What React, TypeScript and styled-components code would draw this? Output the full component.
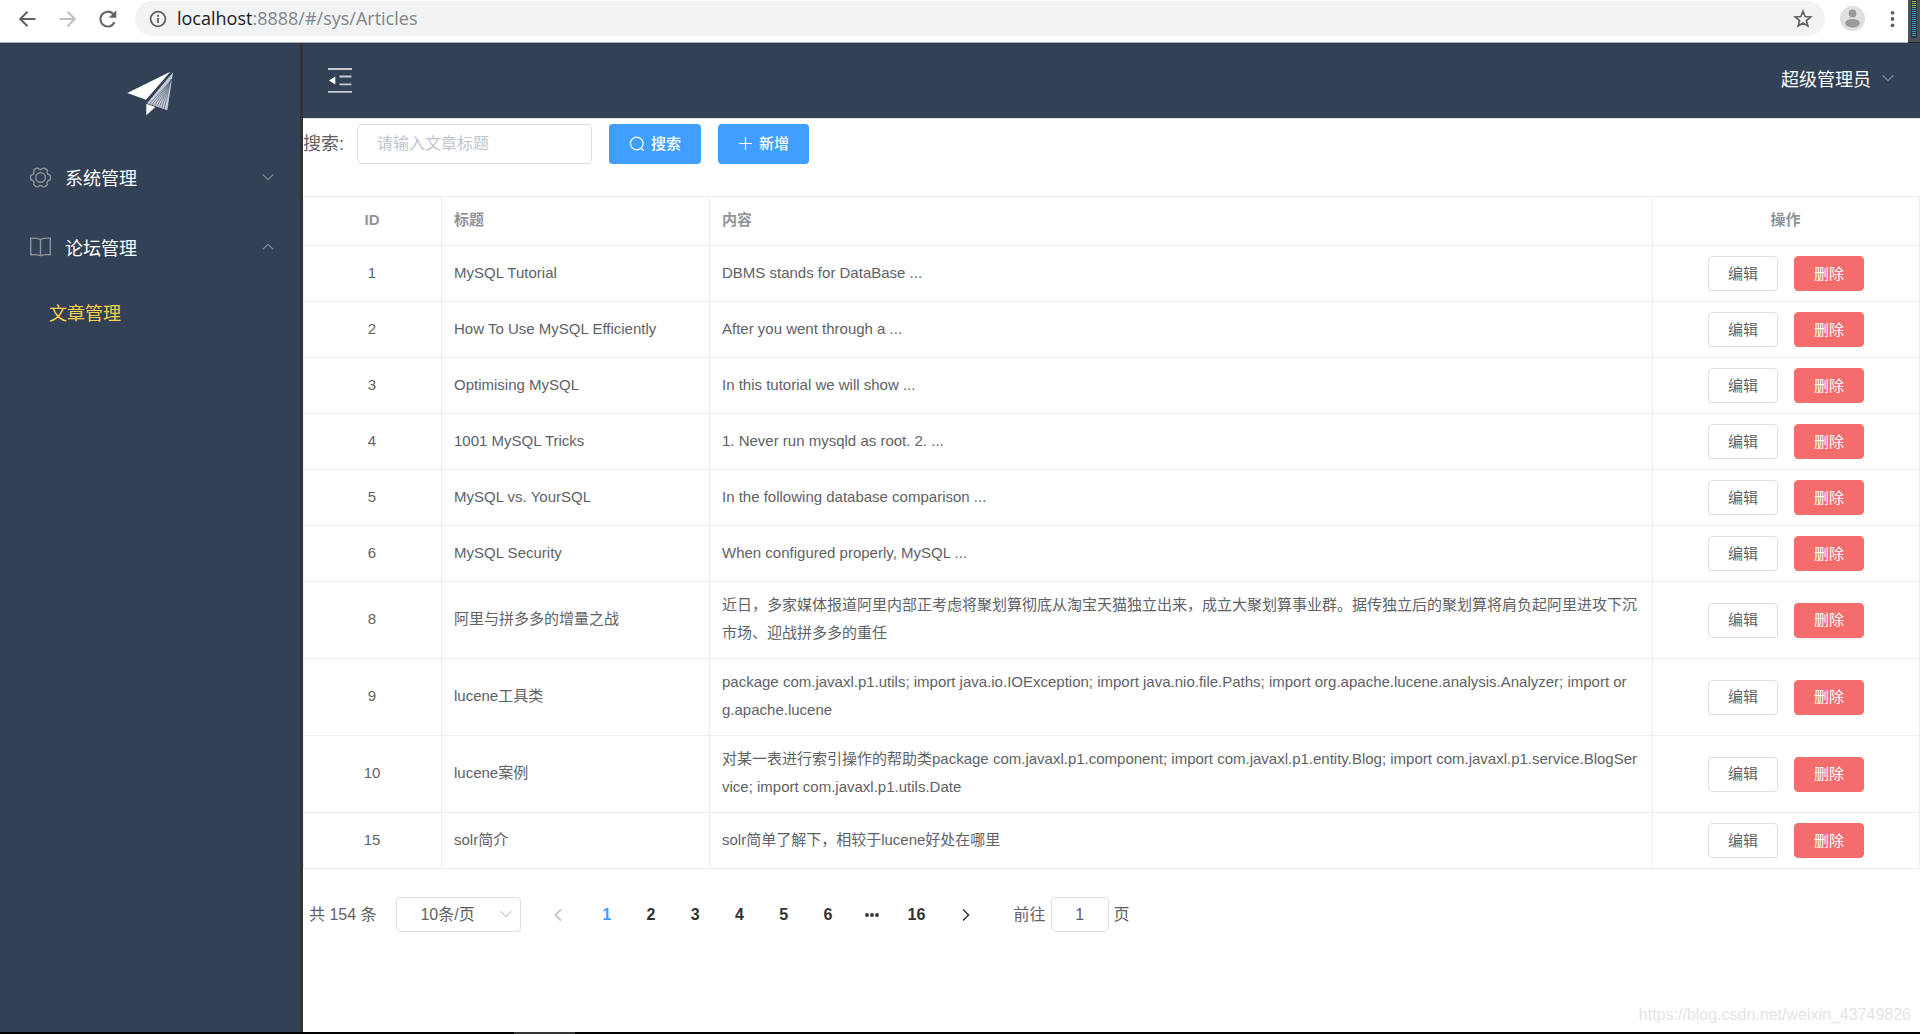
import React, { useState } from "react";
import styled, { createGlobalStyle } from "styled-components";

const GlobalStyle = createGlobalStyle`
  * { box-sizing: border-box; }
  body {
    margin: 0;
    background: #fff;
    color: #606266;
    font-family: "Liberation Sans", "Noto Sans CJK SC", sans-serif;
  }
  button, input, select { font-family: inherit; margin: 0; }
  button { cursor: pointer; }
`;

const Page = styled.div`
  display: flex;
  flex-direction: column;
  min-height: 100vh;
`;

/* ---------- browser bar ---------- */

const BrowserBar = styled.header`
  display: flex;
  align-items: flex-start;
  height: 43px;
  background: #fff;
  border-bottom: 1px solid #a9acb0;
`;

const NavButtons = styled.div`
  display: flex;
  align-items: center;
  gap: 20px;
  height: 37px;
  padding: 0 15px 0 17px;
`;

const IconButton = styled.button<{ $color?: string }>`
  display: flex;
  padding: 0;
  border: 0;
  background: none;
  color: ${(p) => p.$color || "#5f6368"};
`;

const AddressBar = styled.div`
  display: flex;
  flex: 1;
  align-items: center;
  height: 35px;
  margin-top: 1px;
  padding: 0 12px 0 14px;
  gap: 10px;
  border-radius: 18px;
  background: #f1f3f4;
`;

const Url = styled.div`
  flex: 1;
  padding-bottom: 2px;
  color: #80868b;
  font: 18px/24px "Open Sans", "Noto Sans", sans-serif;
`;

const UrlHost = styled.span`
  color: #202124;
`;

const BrowserTools = styled.div`
  display: flex;
  align-items: center;
  gap: 16px;
  height: 37px;
  padding: 0 4px 0 15px;
`;

const LedStrip = styled.div`
  width: 12px;
  height: 43px;
  padding: 0 3px 4px;
  background: #4a5158;
  border-bottom: 1px solid #23272c;
`;

const Leds = styled.div`
  height: 38px;
  border: 1px solid #2d3338;
  border-top: 0;
  background: repeating-linear-gradient(#2d3338 0 1px, transparent 1px 2px),
    linear-gradient(#9cc04c 0 6px, #2f9fd0 10px);
`;

/* ---------- shell ---------- */

const Shell = styled.div`
  display: flex;
  flex: 1;
`;

const Sidebar = styled.aside`
  flex: none;
  width: 303px;
  background: #334157;
  border-right: 3px solid #333;
`;

const LogoArea = styled.div`
  display: flex;
  align-items: center;
  justify-content: center;
  height: 100px;
`;

const MenuItem = styled.button`
  display: flex;
  align-items: center;
  width: 100%;
  height: 70px;
  padding: 0 26px 2px 30px;
  gap: 14px;
  border: 0;
  background: none;
  color: #fff;
  font-size: 18px;
  text-align: left;
`;

const MenuText = styled.span`
  flex: 1;
`;

const SubItem = styled.a`
  display: block;
  padding-left: 49px;
  color: #ffd04b;
  font-size: 18px;
  line-height: 62px;
  text-decoration: none;
`;

const Main = styled.div`
  display: flex;
  flex: 1;
  flex-direction: column;
  min-width: 0;
`;

const TopBar = styled.div`
  display: flex;
  align-items: center;
  justify-content: space-between;
  height: 76px;
  padding: 0 26px 2px 24px;
  background: #334157;
  border-bottom: 1px solid #e6e6e6;
`;

const UserMenu = styled.button`
  display: flex;
  align-items: center;
  gap: 11px;
  padding: 0 0 3px;
  border: 0;
  background: none;
  color: #fff;
  font-size: 18px;
`;

/* ---------- toolbar ---------- */

const Toolbar = styled.form`
  display: flex;
  align-items: center;
  gap: 17px;
  padding: 5px 0 32px;
`;

const Field = styled.label`
  display: flex;
  align-items: center;
  gap: 13px;
  font-size: 18px;
`;

const FieldText = styled.span`
  padding-bottom: 4px;
`;

const SearchInput = styled.input`
  width: 235px;
  height: 40px;
  padding: 0 19px;
  border: 1px solid #dcdfe6;
  border-radius: 5px;
  color: #606266;
  font-size: 16px;
  &::placeholder { color: #c0c4cc; }
`;

const PrimaryButton = styled.button`
  display: flex;
  align-items: center;
  height: 40px;
  padding: 0 20px 3px;
  gap: 6px;
  border: 0;
  border-radius: 4px;
  background: #409eff;
  color: #fff;
  font-size: 15px;
  font-weight: 500;
`;

/* ---------- table ---------- */

const Table = styled.table`
  width: 100%;
  table-layout: fixed;
  border-collapse: separate;
  border-spacing: 0;
  border-top: 1px solid #ebeef5;
  border-left: 1px solid #ebeef5;
  font-size: 15px;
  line-height: 28px;
`;

const Column = styled.col<{ $width?: number }>`
  width: ${(p) => (p.$width ? `${p.$width}px` : "auto")};
`;

const HeadCell = styled.th<{ $center?: boolean }>`
  padding: 9px 13px 11px 12px;
  border-right: 1px solid #ebeef5;
  border-bottom: 1px solid #ebeef5;
  color: #909399;
  font-weight: 700;
  text-align: ${(p) => (p.$center ? "center" : "left")};
`;

const Cell = styled.td<{ $center?: boolean }>`
  padding: 9px 13px 11px 12px;
  border-right: 1px solid #ebeef5;
  border-bottom: 1px solid #ebeef5;
  text-align: ${(p) => (p.$center ? "center" : "left")};
  word-break: break-all;
`;

const ActionCell = styled(Cell)`
  padding: 10px 12px;
`;

const Actions = styled.div`
  display: flex;
  justify-content: center;
  gap: 16px;
`;

const RowButton = styled.button<{ $danger?: boolean }>`
  width: 70px;
  height: 35px;
  padding: 0 0 3px;
  border: 1px solid ${(p) => (p.$danger ? "#f56c6c" : "#dcdfe6")};
  border-radius: 4px;
  background: ${(p) => (p.$danger ? "#f56c6c" : "#fff")};
  color: ${(p) => (p.$danger ? "#fff" : "#606266")};
  font-size: 15px;
`;

/* ---------- pagination ---------- */

const Pagination = styled.nav`
  display: flex;
  align-items: center;
  padding: 28px 6px;
  font-size: 16px;
`;

const PagerText = styled.span`
  padding-bottom: 4px;
`;

const SelectBox = styled.div`
  position: relative;
  margin: 0 15px 0 19px;
`;

const SizeSelect = styled.select`
  display: block;
  width: 125px;
  height: 35px;
  padding: 0 31px 0 10px;
  appearance: none;
  border: 1px solid #dcdfe6;
  border-radius: 4px;
  background: #fff;
  color: #606266;
  font-size: 16px;
  text-align: center;
  text-align-last: center;
`;

const SelectArrow = styled.span`
  position: absolute;
  top: 13px;
  right: 9px;
  display: flex;
  color: #c0c4cc;
  pointer-events: none;
`;

const PageArrow = styled.button`
  display: flex;
  align-items: center;
  justify-content: center;
  width: 44px;
  height: 35px;
  padding: 0;
  border: 0;
  background: none;
  color: #303133;
  &:disabled { color: #c0c4cc; }
`;

const PageList = styled.div`
  display: grid;
  grid-template-columns: repeat(8, 1fr);
  align-items: center;
  width: 354px;
  margin: 0 5px;
`;

const PageNumber = styled.button<{ $active?: boolean }>`
  display: flex;
  align-items: center;
  justify-content: center;
  height: 35px;
  padding: 0;
  border: 0;
  background: none;
  color: ${(p) => (p.$active ? "#409eff" : "#303133")};
  font-size: 16px;
  font-weight: 700;
`;

const Jump = styled.label`
  display: flex;
  align-items: center;
  gap: 5px;
  margin-left: 26px;
`;

const JumpInput = styled.input`
  width: 58px;
  height: 35px;
  padding: 0 4px;
  border: 1px solid #dcdfe6;
  border-radius: 5px;
  color: #606266;
  font-size: 16px;
  text-align: center;
`;

const Watermark = styled.div`
  position: absolute;
  right: 9px;
  bottom: 9px;
  color: #e4e4e4;
  font-size: 16px;
  line-height: 20px;
`;

const TaskbarEdge = styled.div`
  height: 2px;
  background: linear-gradient(90deg, #000 514px, #333 514px 575px, #000 575px);
`;

/* ---------- icons ---------- */

function Chevron({ up = false, color = "#8c9099" }: { up?: boolean; color?: string }) {
  return (
    <svg width="12" height="8" viewBox="0 0 12 8" fill="none" stroke={color} strokeWidth="1.1">
      <path d={up ? "M.6 6.4 6 1.4l5.4 5" : "M.6 1.4 6 6.6l5.4-5.2"} />
    </svg>
  );
}

function PlaneLogo() {
  const stripes = [0.12, 0.24, 0.36, 0.48, 0.6, 0.72, 0.84];
  return (
    <svg width="47" height="45" viewBox="20 20 141 135" role="img" aria-label="logo">
      <path fill="#fff" d="M21 86 150 22 77 106z" />
      <path fill="#c4cad3" d="M158 24 141 138 80 117z" />
      {stripes.map((t) => (
        <path
          key={t}
          stroke="#56637a"
          strokeWidth="2"
          d={`M${156 - t * 4} 44 L${80 + 61 * t} ${117 + 21 * t}`}
        />
      ))}
      <path fill="#fff" d="M78 118v35l27-25z" />
    </svg>
  );
}

function FoldIcon() {
  return (
    <svg width="26" height="26" viewBox="0 0 26 26" stroke="#c6cad2" strokeWidth="1.8">
      <path d="M1 2h24M12.500 9.500h12M12.500 17.300h12M1 24.800h24" />
      <path d="M2 13.500 8.300 9.500v8z" fill="#fff" stroke="none" />
    </svg>
  );
}

/* Six rounded teeth, one every 60 degrees */
const gearOutline =
  Array.from({ length: 72 }, (_, i) => {
    const angle = (i * Math.PI) / 36;
    const wave = Math.cos(6 * angle);
    const radius = 8.9 + 1.1 * Math.tanh(2 * wave + 0.8);
    const x = 10.5 + radius * Math.cos(angle);
    const y = 10.5 + radius * Math.sin(angle);
    return `${i ? "L" : "M"}${x.toFixed(2)} ${y.toFixed(2)}`;
  }).join("") + "z";

function GearIcon() {
  return (
    <svg width="21" height="21" viewBox="0 0 21 21" fill="none" stroke="#909399" strokeWidth="1.4">
      <path strokeLinejoin="round" d={gearOutline} />
      <circle cx="10.500" cy="10.500" r="4.800" />
    </svg>
  );
}

function BookIcon() {
  return (
    <svg width="21" height="20" viewBox="0 0 21 20" fill="none" stroke="#909399" strokeWidth="1.4">
      <path d="M.7 1.200Q6 .8 10.500 2.300 15 .8 20.300 1.200V17.800Q15 17.200 10.500 18.700 6 17.200.7 17.800zM10.500 2.300V18.700" />
    </svg>
  );
}

function PageChevron({ next = false }: { next?: boolean }) {
  return (
    <svg width="10" height="14" viewBox="0 0 10 14" fill="none" stroke="currentColor" strokeWidth={next ? 1.4 : 1.8}>
      <path d={next ? "M2 1.500 7.600 7 2 12.500" : "M8 1.500 2.400 7 8 12.500"} />
    </svg>
  );
}

/* ---------- data ---------- */

const articles = [
  { id: 1, title: "MySQL Tutorial", body: "DBMS stands for DataBase ..." },
  { id: 2, title: "How To Use MySQL Efficiently", body: "After you went through a ..." },
  { id: 3, title: "Optimising MySQL", body: "In this tutorial we will show ..." },
  { id: 4, title: "1001 MySQL Tricks", body: "1. Never run mysqld as root. 2. ..." },
  { id: 5, title: "MySQL vs. YourSQL", body: "In the following database comparison ..." },
  { id: 6, title: "MySQL Security", body: "When configured properly, MySQL ..." },
  {
    id: 8,
    title: "阿里与拼多多的增量之战",
    body: "近日，多家媒体报道阿里内部正考虑将聚划算彻底从淘宝天猫独立出来，成立大聚划算事业群。据传独立后的聚划算将肩负起阿里进攻下沉市场、迎战拼多多的重任",
  },
  {
    id: 9,
    title: "lucene工具类",
    body: "package com.javaxl.p1.utils; import java.io.IOException; import java.nio.file.Paths; import org.apache.lucene.analysis.Analyzer; import org.apache.lucene",
  },
  {
    id: 10,
    title: "lucene案例",
    body: "对某一表进行索引操作的帮助类package com.javaxl.p1.component; import com.javaxl.p1.entity.Blog; import com.javaxl.p1.service.BlogService; import com.javaxl.p1.utils.Date",
  },
  { id: 15, title: "solr简介", body: "solr简单了解下，相较于lucene好处在哪里" },
];

function Browser() {
  return (
    <BrowserBar>
      <NavButtons>
        <IconButton aria-label="后退">
          <svg width="20" height="20" viewBox="0 0 20 20" fill="none" stroke="currentColor" strokeWidth="2">
            <path d="M18.500 10H4M10.500 2.700 3.200 10l7.300 7.300" />
          </svg>
        </IconButton>
        <IconButton aria-label="前进" $color="#bdc1c6">
          <svg width="20" height="20" viewBox="0 0 20 20" fill="none" stroke="currentColor" strokeWidth="2">
            <path d="M2.500 10H17M10.500 2.700 17.800 10l-7.300 7.300" />
          </svg>
        </IconButton>
        <IconButton aria-label="刷新">
          <svg width="23" height="20" viewBox="0 0 23 20" fill="none" stroke="currentColor" strokeWidth="2.100">
            <path d="M17.500 13.200A7.400 7.400 0 1 1 16 4.800L17.400 6.200" />
            <path d="M19.300 1.200v7.600h-7.600z" fill="currentColor" stroke="none" />
          </svg>
        </IconButton>
      </NavButtons>
      <AddressBar>
        <svg width="18" height="18" viewBox="0 0 18 18" fill="none" stroke="#5f6368" strokeWidth="1.800">
          <circle cx="9" cy="9" r="7.400" />
          <path d="M9 8v5M9 4.800v1.900" />
        </svg>
        <Url>
          <UrlHost>localhost</UrlHost>:8888/#/sys/Articles
        </Url>
        <IconButton aria-label="收藏">
          <svg width="20" height="20" viewBox="0 0 20 20" fill="none" stroke="currentColor" strokeWidth="1.700">
            <path d="M10 2.300 12.100 7.500 17.700 7.900 13.400 11.500 14.800 17 10 14 5.200 17 6.600 11.500 2.300 7.900 7.900 7.500z" />
          </svg>
        </IconButton>
      </AddressBar>
      <BrowserTools>
        <IconButton aria-label="账户">
          <svg width="25" height="25" viewBox="0 0 25 25">
            <circle cx="12.500" cy="12.500" r="12.500" fill="#dedede" />
            <circle cx="12.500" cy="7.500" r="3.900" fill="#9a9a9a" />
            <ellipse cx="12.500" cy="17.300" rx="7.300" ry="4.200" fill="#9a9a9a" />
          </svg>
        </IconButton>
        <IconButton aria-label="更多">
          <svg width="23" height="20" viewBox="0 0 23 20" fill="#5f6368">
            <circle cx="11.500" cy="3.800" r="1.900" />
            <circle cx="11.500" cy="10" r="1.900" />
            <circle cx="11.500" cy="16.300" r="1.900" />
          </svg>
        </IconButton>
      </BrowserTools>
      <LedStrip>
        <Leds />
      </LedStrip>
    </BrowserBar>
  );
}

function ArticleTable() {
  return (
    <Table>
      <colgroup>
        <Column $width={138} />
        <Column $width={268} />
        <Column />
        <Column $width={267} />
      </colgroup>
      <thead>
        <tr>
          <HeadCell $center>ID</HeadCell>
          <HeadCell>标题</HeadCell>
          <HeadCell>内容</HeadCell>
          <HeadCell $center>操作</HeadCell>
        </tr>
      </thead>
      <tbody>
        {articles.map((a) => (
          <tr key={a.id}>
            <Cell $center>{a.id}</Cell>
            <Cell>{a.title}</Cell>
            <Cell>{a.body}</Cell>
            <ActionCell>
              <Actions>
                <RowButton type="button">编辑</RowButton>
                <RowButton type="button" $danger>
                  删除
                </RowButton>
              </Actions>
            </ActionCell>
          </tr>
        ))}
      </tbody>
    </Table>
  );
}

function Pager() {
  const [page, setPage] = useState(1);
  return (
    <Pagination aria-label="分页">
      <PagerText>共 154 条</PagerText>
      <SelectBox>
        <SizeSelect aria-label="每页条数" defaultValue="10">
          <option value="10">10条/页</option>
        </SizeSelect>
        <SelectArrow>
          <Chevron color="currentColor" />
        </SelectArrow>
      </SelectBox>
      <PageArrow aria-label="上一页" disabled={page === 1} onClick={() => setPage(page - 1)}>
        <PageChevron />
      </PageArrow>
      <PageList>
        {[1, 2, 3, 4, 5, 6].map((n) => (
          <PageNumber key={n} $active={n === page} onClick={() => setPage(n)}>
            {n}
          </PageNumber>
        ))}
        <PageNumber aria-label="更多页">
          <svg width="16" height="6" viewBox="0 0 16 6" fill="#303133">
            <circle cx="3" cy="3" r="1.900" />
            <circle cx="8" cy="3" r="1.900" />
            <circle cx="13" cy="3" r="1.900" />
          </svg>
        </PageNumber>
        <PageNumber $active={page === 16} onClick={() => setPage(16)}>
          16
        </PageNumber>
      </PageList>
      <PageArrow aria-label="下一页" disabled={page === 16} onClick={() => setPage(page + 1)}>
        <PageChevron next />
      </PageArrow>
      <Jump>
        <PagerText>前往</PagerText>
        <JumpInput key={page} defaultValue={page} />
        <PagerText>页</PagerText>
      </Jump>
    </Pagination>
  );
}

export default function App() {
  return (
    <Page>
      <GlobalStyle />
      <Browser />
      <Shell>
        <Sidebar>
          <LogoArea>
            <PlaneLogo />
          </LogoArea>
          <MenuItem>
            <GearIcon />
            <MenuText>系统管理</MenuText>
            <Chevron />
          </MenuItem>
          <MenuItem>
            <BookIcon />
            <MenuText>论坛管理</MenuText>
            <Chevron up />
          </MenuItem>
          <SubItem href="#/sys/Articles">文章管理</SubItem>
        </Sidebar>
        <Main>
          <TopBar>
            <IconButton aria-label="收起菜单">
              <FoldIcon />
            </IconButton>
            <UserMenu>
              超级管理员
              <Chevron />
            </UserMenu>
          </TopBar>
          <Toolbar onSubmit={(e) => e.preventDefault()}>
            <Field>
              <FieldText>搜索:</FieldText>
              <SearchInput placeholder="请输入文章标题" />
            </Field>
            <PrimaryButton type="submit">
              <svg width="16" height="16" viewBox="0 0 16 16" fill="none" stroke="currentColor" strokeWidth="1.200">
                <circle cx="7.700" cy="8.500" r="6.300" />
                <path d="m12 13 2.800 3" />
              </svg>
              搜索
            </PrimaryButton>
            <PrimaryButton type="button">
              <svg width="15" height="15" viewBox="0 0 15 15" stroke="currentColor" strokeWidth="1.200">
                <path d="M7.500 2v13M1 8.500h13" />
              </svg>
              新增
            </PrimaryButton>
          </Toolbar>
          <ArticleTable />
          <Pager />
        </Main>
      </Shell>
      <TaskbarEdge />
      <Watermark>https://blog.csdn.net/weixin_43749826</Watermark>
    </Page>
  );
}
